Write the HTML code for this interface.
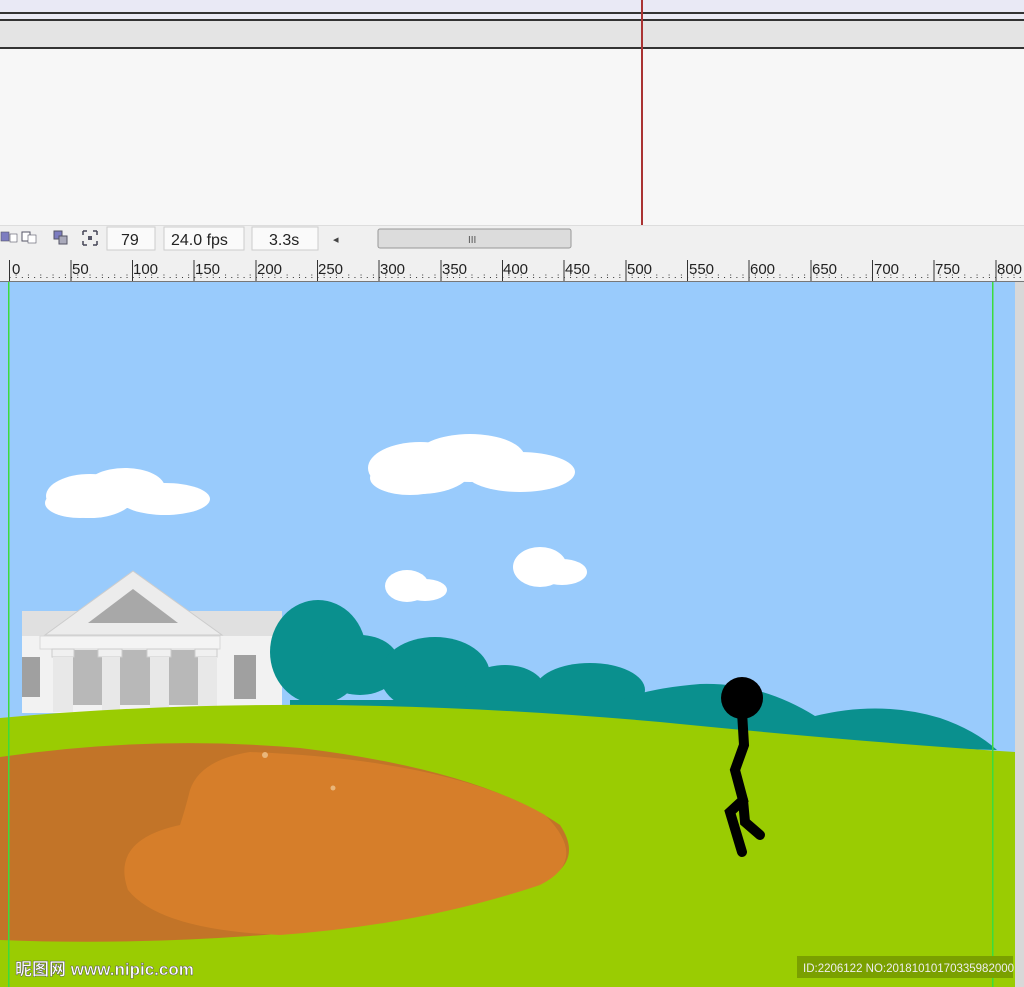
<!DOCTYPE html>
<html><head><meta charset="utf-8"><style>
body{margin:0;width:1024px;height:987px;overflow:hidden;background:#f7f7f7;font-family:"Liberation Sans",sans-serif;}
</style></head><body>
<svg width="1024" height="987" viewBox="0 0 1024 987" xmlns="http://www.w3.org/2000/svg" style="position:absolute;left:0;top:0">
<rect x="0" y="0" width="1024" height="14" fill="#e9e9f5"/>
<rect x="0" y="12" width="1024" height="2" fill="#333"/>
<rect x="0" y="14" width="1024" height="6" fill="#eaeaf4"/>
<rect x="0" y="19" width="1024" height="2" fill="#333"/>
<rect x="0" y="21" width="1024" height="27" fill="#e4e4e4"/>
<rect x="0" y="47" width="1024" height="2" fill="#333"/>
<rect x="0" y="49" width="1024" height="176" fill="#f7f7f7"/>
<rect x="641" y="0" width="2" height="225" fill="#a33"/>
<rect x="0" y="225" width="1024" height="30" fill="#f0f0f0"/>
<line x1="0" y1="225.5" x2="1024" y2="225.5" stroke="#ddd"/>
<g fill="#7c7cc0" stroke="#556"><rect x="1" y="232" width="8" height="9" stroke-width="0.6"/><rect x="22" y="232" width="8" height="9" fill="#fff"/><rect x="54" y="231" width="8" height="8"/><rect x="59" y="236" width="8" height="8" fill="#aab"/></g>
<rect x="10" y="234" width="7" height="8" fill="#fff" stroke="#556" stroke-width="0.6"/><rect x="28" y="235" width="8" height="8" fill="#fff" stroke="#556" stroke-width="0.6"/>
<path d="M83 231h4M83 231v4M97 231h-4M97 231v4M83 245h4M83 245v-4M97 245h-4M97 245v-4" stroke="#445" stroke-width="1.5" fill="none"/><rect x="88" y="236" width="4" height="4" fill="#556"/>
<g fill="#fafafa" stroke="#ccc"><rect x="107" y="227" width="48" height="23"/><rect x="164" y="227" width="80" height="23"/><rect x="252" y="227" width="66" height="23"/></g>
<g font-size="16" fill="#222"><text x="121" y="245">79</text><text x="171" y="245">24.0 fps</text><text x="269" y="245">3.3s</text></g>
<text x="333" y="243" font-size="11" fill="#444">◂</text>
<rect x="378" y="229" width="193" height="19" rx="2" fill="#dcdcdc" stroke="#999"/>
<text x="468" y="243" font-size="10" fill="#555">III</text>
<rect x="0" y="255" width="1024" height="27" fill="#f0f0f0"/>
<line x1="0" y1="281.5" x2="1024" y2="281.5" stroke="#777"/>
<g font-size="15" fill="#222">
<text x="12" y="274">0</text><text x="72" y="274">50</text><text x="133" y="274">100</text><text x="195" y="274">150</text><text x="257" y="274">200</text><text x="318" y="274">250</text><text x="380" y="274">300</text><text x="442" y="274">350</text><text x="503" y="274">400</text><text x="565" y="274">450</text><text x="627" y="274">500</text><text x="689" y="274">550</text><text x="750" y="274">600</text><text x="812" y="274">650</text><text x="874" y="274">700</text><text x="935" y="274">750</text><text x="997" y="274">800</text>
</g>
<path stroke="#333" stroke-width="1" fill="none" d="
M9.5 260V281M71 260V281M132.5 260V281M194 260V281M256 260V281M317.5 260V281M379 260V281M441 260V281M502.5 260V281M564 260V281M626 260V281M687.5 260V281M749 260V281M811 260V281M872.5 260V281M934 260V281M996 260V281"/>
<path stroke="#333" stroke-width="1" stroke-dasharray="1 5.16" fill="none" d="M9.5 277.5H1024"/>
<path stroke="#333" stroke-width="1" stroke-dasharray="1 11.32" fill="none" d="M15.6 275H1024"/>
<rect x="0" y="282" width="1015" height="705" fill="#99cbfc"/>
<rect x="1015" y="282" width="9" height="705" fill="#d8d8d8"/>
<g fill="#fff">
<ellipse cx="90" cy="496" rx="44" ry="22"/><ellipse cx="125" cy="488" rx="40" ry="20"/><ellipse cx="165" cy="499" rx="45" ry="16"/><ellipse cx="80" cy="503" rx="35" ry="15"/>
<ellipse cx="420" cy="468" rx="52" ry="26"/><ellipse cx="470" cy="458" rx="55" ry="24"/><ellipse cx="520" cy="472" rx="55" ry="20"/><ellipse cx="410" cy="478" rx="40" ry="17"/>
<ellipse cx="407" cy="586" rx="22" ry="16"/><ellipse cx="425" cy="590" rx="22" ry="11"/>
<ellipse cx="540" cy="567" rx="27" ry="20"/><ellipse cx="562" cy="572" rx="25" ry="13"/>
</g>
<rect x="22" y="611" width="260" height="102" fill="#f2f2f2"/>
<rect x="22" y="611" width="260" height="25" fill="#e0e0e0"/>
<rect x="22" y="657" width="18" height="40" fill="#a0a0a0"/>
<rect x="234" y="655" width="22" height="44" fill="#a0a0a0"/>
<polygon points="133,571 45,635 222,635" fill="#ececec" stroke="#ccc"/>
<polygon points="133,589 88,623 178,623" fill="#a8a8a8"/>
<rect x="40" y="636" width="180" height="13" fill="#f4f4f4" stroke="#d8d8d8"/>
<rect x="60" y="650" width="150" height="55" fill="#b8b8b8"/>
<g fill="#f0f0f0" stroke="#ccc"><rect x="52" y="649" width="22" height="8"/><rect x="98" y="649" width="24" height="8"/><rect x="147" y="649" width="24" height="8"/><rect x="195" y="649" width="22" height="8"/></g>
<g fill="#e8e8e8"><rect x="53" y="657" width="20" height="55"/><rect x="102" y="657" width="18" height="55"/><rect x="150" y="657" width="19" height="55"/><rect x="198" y="657" width="19" height="55"/></g>
<g fill="#0a908e">
<ellipse cx="318" cy="652" rx="48" ry="52"/>
<ellipse cx="360" cy="665" rx="40" ry="30"/>
<ellipse cx="435" cy="675" rx="55" ry="38"/>
<ellipse cx="505" cy="690" rx="40" ry="25"/>
<ellipse cx="590" cy="690" rx="55" ry="27"/>
<path d="M290 700 H620 Q650 688 700 684 Q760 682 815 716 Q880 700 940 718 Q975 730 997 750 L290 730Z"/>
</g>
<path d="M0 718 Q300 690 660 722 Q860 742 1015 752 V987 H0Z" fill="#9acc02"/>
<path d="M0 757 Q150 735 300 748 Q480 770 560 825 Q590 870 520 890 Q420 925 250 936 Q120 945 0 940Z" fill="#c27428"/>
<path d="M190 790 Q200 760 250 752 Q450 760 545 815 Q590 860 540 885 Q420 925 280 935 Q160 930 128 890 Q110 840 180 825 Q185 810 190 790Z" fill="#d67e2a"/>
<circle cx="265" cy="755" r="3" fill="#e9b67a"/><circle cx="333" cy="788" r="2.5" fill="#e9b67a"/>
<g stroke="#000" stroke-width="10" stroke-linecap="round" fill="none">
<circle cx="742" cy="698" r="21" fill="#000" stroke="none"/>
<path d="M742 712 L744 745 L735 770 L743 800 L730 812 L742 852"/>
<path d="M743 800 L745 822 L760 835"/>
</g>
<rect x="8" y="282" width="1.5" height="705" fill="#3cdc3c"/>
<rect x="992" y="282" width="1.5" height="705" fill="#3cdc3c"/>
<rect x="797" y="956" width="216" height="22" fill="#7aa000"/>
<text x="803" y="972" font-size="11.5" fill="#eee" font-family="Liberation Sans Narrow, Liberation Sans, sans-serif">ID:2206122 NO:20181010170335982000</text>
<text x="15" y="975" font-size="17" font-weight="bold" fill="#fff" stroke="#555" stroke-width="0.5" font-family="Liberation Sans,'Noto Sans CJK SC',sans-serif">昵图网 www.nipic.com</text>
</svg>
</body></html>
